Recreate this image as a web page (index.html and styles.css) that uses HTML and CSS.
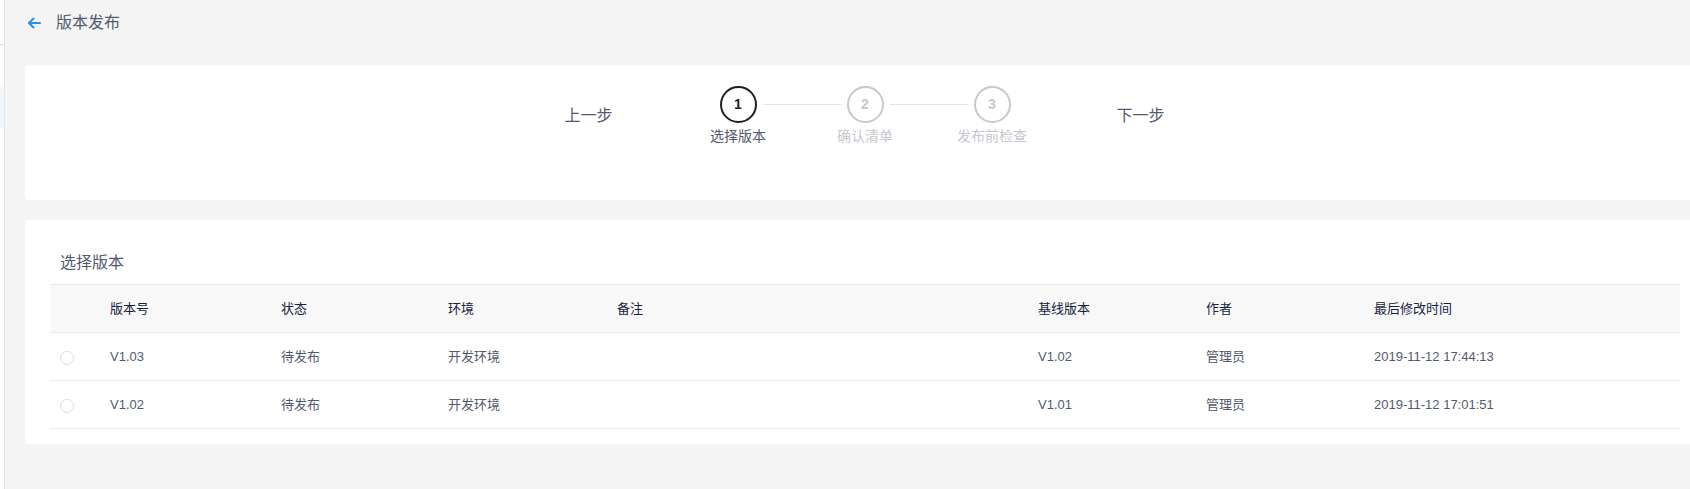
FILE: index.html
```html
<!DOCTYPE html>
<html lang="zh-CN">
<head>
<meta charset="utf-8">
<title>版本发布</title>
<link rel="stylesheet" href="styles.css">
</head>
<body>
<div class="layout">
  <aside class="sidebar">
    <div class="sidebar-head"></div>
    <div class="sidebar-item"></div>
    <div class="sidebar-item active"></div>
  </aside>
  <main class="main">
    <header class="page-head">
      <svg class="back" width="14" height="12" viewBox="0 0 14 12" fill="none" stroke="#2d8cf0" stroke-width="2" stroke-linecap="round" stroke-linejoin="round"><path d="M13 6H2"/><path d="M6.5 1.5L2 6l4.5 4.5"/></svg>
      <span class="page-title">版本发布</span>
    </header>

    <section class="card steps-card">
      <div class="steps-bar">
        <span class="nav-btn">上一步</span>
        <div class="steps">
          <div class="step active"><div class="step-dot">1</div><div class="step-label">选择版本</div></div>
          <div class="step"><div class="step-dot">2</div><div class="step-label">确认清单</div></div>
          <div class="step last"><div class="step-dot">3</div><div class="step-label">发布前检查</div></div>
        </div>
        <span class="nav-btn">下一步</span>
      </div>
    </section>

    <section class="card table-card">
      <h2 class="card-title">选择版本</h2>
      <div class="table">
        <div class="row head">
          <div class="cell"></div>
          <div class="cell">版本号</div>
          <div class="cell">状态</div>
          <div class="cell">环境</div>
          <div class="cell">备注</div>
          <div class="cell">基线版本</div>
          <div class="cell">作者</div>
          <div class="cell">最后修改时间</div>
        </div>
        <div class="row">
          <div class="cell"><span class="radio"></span></div>
          <div class="cell">V1.03</div>
          <div class="cell">待发布</div>
          <div class="cell">开发环境</div>
          <div class="cell"></div>
          <div class="cell">V1.02</div>
          <div class="cell">管理员</div>
          <div class="cell">2019-11-12 17:44:13</div>
        </div>
        <div class="row">
          <div class="cell"><span class="radio"></span></div>
          <div class="cell">V1.02</div>
          <div class="cell">待发布</div>
          <div class="cell">开发环境</div>
          <div class="cell"></div>
          <div class="cell">V1.01</div>
          <div class="cell">管理员</div>
          <div class="cell">2019-11-12 17:01:51</div>
        </div>
      </div>
    </section>
  </main>
</div>
</body>
</html>
```

FILE: styles.css
```css
* { box-sizing: border-box; }
html, body {
  margin: 0;
  padding: 0;
  height: 100%;
  overflow: hidden;
  background: #f4f4f4;
  font-family: "Liberation Sans", "Noto Sans CJK SC", sans-serif;
  color: #515a6e;
}
.layout {
  display: flex;
  min-height: 100%;
}
.sidebar {
  width: 5px;
  flex: 0 0 5px;
  background: #fff;
  border-right: 1px solid #e4e4e4;
}
.sidebar-head {
  height: 45px;
  border-bottom: 1px solid #dcdee2;
}
.sidebar-item {
  height: 42px;
}
.sidebar-item.active {
  height: 41px;
  background: #f0f7ff;
}
.main {
  flex: 1;
  min-width: 0;
  padding-left: 20px;
}
.page-head {
  display: flex;
  align-items: center;
  height: 65px;
  padding: 0 0 20px 2px;
}
.back { display: block; margin-top: 1px; }
.page-title {
  margin-left: 15px;
  font-size: 16px;
  line-height: 22px;
  color: #515a6e;
}
.card {
  background: #fff;
  border-radius: 4px;
  margin-right: -15px;
}
.steps-card {
  height: 135px;
  padding-top: 21px;
}
.steps-bar {
  display: flex;
  justify-content: center;
  align-items: flex-start;
  gap: 61px;
}
.nav-btn {
  margin-top: 19px;
  font-size: 16px;
  line-height: 22px;
  color: #515a6e;
  width: 49px;
}
.steps {
  display: flex;
}
.step {
  position: relative;
  width: 127px;
  display: flex;
  flex-direction: column;
  align-items: center;
}
.step::after {
  content: "";
  position: absolute;
  top: 18px;
  left: calc(50% + 25px);
  width: 79px;
  height: 1px;
  background: #e3e5e8;
}
.step.last::after { display: none; }
.step-dot {
  width: 37px;
  height: 37px;
  border-radius: 50%;
  border: 2px solid #c5c8ce;
  color: #c5c8ce;
  font-weight: bold;
  font-size: 14px;
  line-height: 33px;
  text-align: center;
}
.step-label {
  margin-top: 3px;
  font-size: 14px;
  line-height: 20px;
  color: #c5c8ce;
  white-space: nowrap;
}
.step.active .step-dot {
  border-color: #1f1f1f;
  color: #1f1f1f;
}
.step.active .step-label { color: #515a6e; }

.table-card {
  margin-top: 20px;
  padding: 32px 40px 15px 25px;
}
.card-title {
  margin: 0 0 10px 10px;
  font-size: 16px;
  font-weight: normal;
  line-height: 22px;
  color: #515a6e;
}
.table {
  width: 1630px;
}
.row {
  display: grid;
  grid-template-columns: 60px 171px 167px 169px 421px 168px 168px 306px;
  align-items: center;
  height: 48px;
  border-bottom: 1px solid #e8eaec;
  font-size: 13px;
  color: #515a6e;
}
.row.head {
  height: 49px;
  border-top: 1px solid #e8eaec;
  background: #f8f8f9;
  color: #17233d;
}
.cell {
  white-space: nowrap;
  line-height: 18px;
}
.radio {
  display: block;
  margin-left: 10px;
  margin-top: 2px;
  width: 14px;
  height: 14px;
  border-radius: 50%;
  border: 1px solid #dcdee2;
  background: #fff;
}
```
